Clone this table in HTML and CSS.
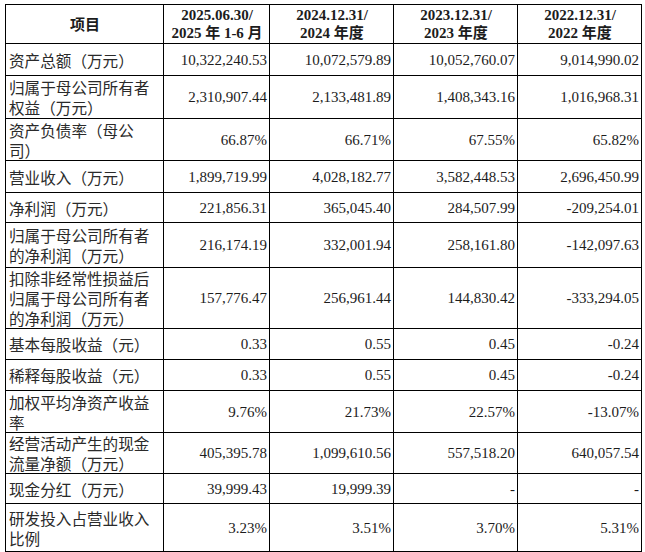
FILE: index.html
```html
<!DOCTYPE html>
<html lang="zh">
<head>
<meta charset="utf-8">
<link rel="stylesheet" href="styles.css">
</head>
<body>
<table class="fin">
  <colgroup>
    <col class="c-label">
    <col class="c-num1">
    <col class="c-num">
    <col class="c-num">
    <col class="c-num">
  </colgroup>
  <thead>
    <tr class="h39">
      <th class="head-label">项目</th>
      <th>2025.06.30/<br>2025 年 1-6 月</th>
      <th>2024.12.31/<br>2024 年度</th>
      <th>2023.12.31/<br>2023 年度</th>
      <th>2022.12.31/<br>2022 年度</th>
    </tr>
  </thead>
  <tbody>
    <tr class="h32"><td class="lbl">资产总额（万元）</td><td>10,322,240.53</td><td>10,072,579.89</td><td>10,052,760.07</td><td>9,014,990.02</td></tr>
    <tr class="h43"><td class="lbl">归属于母公司所有者权益（万元）</td><td>2,310,907.44</td><td>2,133,481.89</td><td>1,408,343.16</td><td>1,016,968.31</td></tr>
    <tr class="h42"><td class="lbl">资产负债率（母公<br>司）</td><td>66.87%</td><td>66.71%</td><td>67.55%</td><td>65.82%</td></tr>
    <tr class="h32"><td class="lbl">营业收入（万元）</td><td>1,899,719.99</td><td>4,028,182.77</td><td>3,582,448.53</td><td>2,696,450.99</td></tr>
    <tr class="h30"><td class="lbl">净利润（万元）</td><td>221,856.31</td><td>365,045.40</td><td>284,507.99</td><td>-209,254.01</td></tr>
    <tr class="h45"><td class="lbl">归属于母公司所有者的净利润（万元）</td><td>216,174.19</td><td>332,001.94</td><td>258,161.80</td><td>-142,097.63</td></tr>
    <tr class="h61"><td class="lbl">扣除非经常性损益后归属于母公司所有者的净利润（万元）</td><td>157,776.47</td><td>256,961.44</td><td>144,830.42</td><td>-333,294.05</td></tr>
    <tr class="h31"><td class="lbl">基本每股收益（元）</td><td>0.33</td><td>0.55</td><td>0.45</td><td>-0.24</td></tr>
    <tr class="h31"><td class="lbl">稀释每股收益（元）</td><td>0.33</td><td>0.55</td><td>0.45</td><td>-0.24</td></tr>
    <tr class="h42"><td class="lbl">加权平均净资产收益率</td><td>9.76%</td><td>21.73%</td><td>22.57%</td><td>-13.07%</td></tr>
    <tr class="h38"><td class="lbl">经营活动产生的现金流量净额（万元）</td><td>405,395.78</td><td>1,099,610.56</td><td>557,518.20</td><td>640,057.54</td></tr>
    <tr class="h30"><td class="lbl">现金分红（万元）</td><td>39,999.43</td><td>19,999.39</td><td>-</td><td>-</td></tr>
    <tr class="h48"><td class="lbl">研发投入占营业收入比例</td><td>3.23%</td><td>3.51%</td><td>3.70%</td><td>5.31%</td></tr>
  </tbody>
</table>
</body>
</html>
```

FILE: styles.css
```css
html, body {
  margin: 0;
  padding: 0;
  background: #ffffff;
}

body {
  padding: 4px 0 0 5px;
}

.fin {
  border-collapse: collapse;
  table-layout: fixed;
  width: 636px;
  color: #1c1c1c;
  font-family: "Liberation Serif", "Noto Sans CJK SC", serif;
  font-size: 15px;
}

.c-label { width: 158px; }
.c-num1 { width: 106px; }
.c-num { width: 124px; }

.fin th,
.fin td {
  border: 1px solid #000;
  padding: 0 2px 0 3px;
  vertical-align: middle;
}

.fin th {
  font-weight: bold;
  text-align: center;
  line-height: 18px;
  font-size: 15px;
}

.fin th.head-label {
  font-family: "Noto Sans CJK SC", sans-serif;
  font-size: 15px;
}

.fin td {
  text-align: right;
  line-height: 20px;
  white-space: nowrap;
}

.fin td.lbl {
  text-align: left;
  white-space: normal;
  font-family: "Noto Sans CJK SC", sans-serif;
  font-size: 15.6px;
  line-height: 20px;
  color: #2a2a2a;
}

.h30 { height: 30px; }
.h31 { height: 31px; }
.h32 { height: 32px; }
.h38 { height: 38px; }
.h39 { height: 39px; }
.h42 { height: 42px; }
.h43 { height: 43px; }
.h45 { height: 45px; }
.h48 { height: 48px; }
.h61 { height: 61px; }
```
